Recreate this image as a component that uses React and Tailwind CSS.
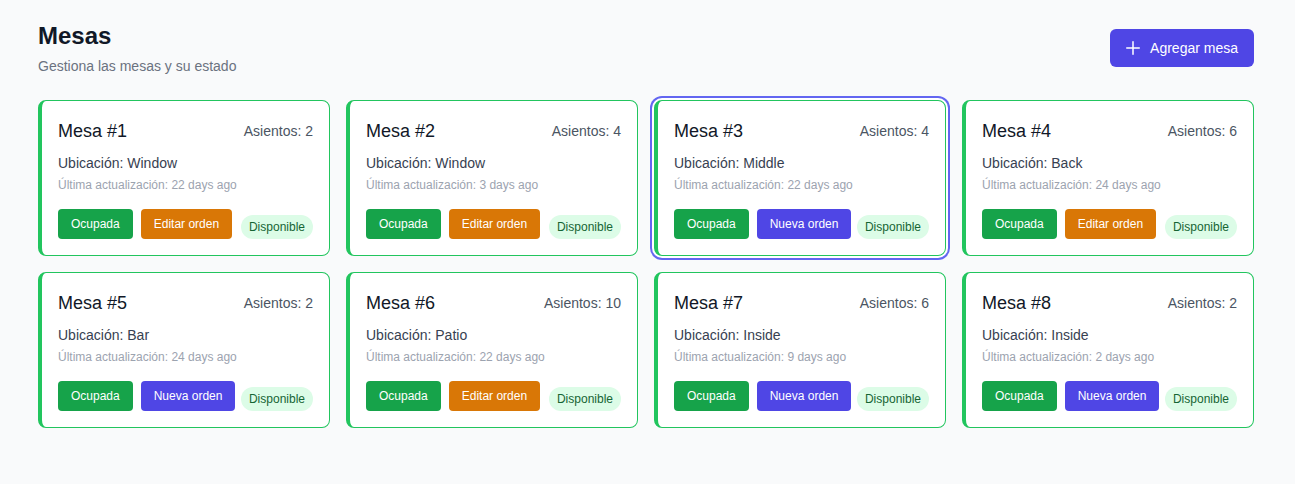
import React from 'react';

const mesas = [
  { n: 1, seats: 2, loc: 'Window', updated: '22 days ago', action: 'edit' },
  { n: 2, seats: 4, loc: 'Window', updated: '3 days ago', action: 'edit' },
  { n: 3, seats: 4, loc: 'Middle', updated: '22 days ago', action: 'new', selected: true },
  { n: 4, seats: 6, loc: 'Back', updated: '24 days ago', action: 'edit' },
  { n: 5, seats: 2, loc: 'Bar', updated: '24 days ago', action: 'new' },
  { n: 6, seats: 10, loc: 'Patio', updated: '22 days ago', action: 'edit' },
  { n: 7, seats: 6, loc: 'Inside', updated: '9 days ago', action: 'new' },
  { n: 8, seats: 2, loc: 'Inside', updated: '2 days ago', action: 'new' },
];

function MesaCard({ mesa }) {
  return (
    <div
      className={
        'bg-white rounded-lg border border-[#22c55e] border-l-4 p-4 ' +
        (mesa.selected ? 'ring-2 ring-[#6366f1] ring-offset-2' : '')
      }
    >
      <div className="flex items-center justify-between">
        <h3 className="text-lg text-[#111827]">Mesa #{mesa.n}</h3>
        <span className="text-sm text-[#4b5563]">Asientos: {mesa.seats}</span>
      </div>
      <p className="mt-2 text-sm text-[#374151]">Ubicación: {mesa.loc}</p>
      <p className="mt-1 text-xs text-[#9ca3af]">Última actualización: {mesa.updated}</p>
      <div className="mt-4 flex items-end justify-between whitespace-nowrap">
        <div className="flex gap-2">
          <button className="bg-[#16a34a] text-white text-xs font-medium px-[13px] py-[7px] rounded">Ocupada</button>
          {mesa.action === 'edit' ? (
            <button className="bg-[#d97706] text-white text-xs font-medium px-[13px] py-[7px] rounded">Editar orden</button>
          ) : (
            <button className="bg-[#4f46e5] text-white text-xs font-medium px-[13px] py-[7px] rounded">Nueva orden</button>
          )}
        </div>
        <span className="bg-[#dcfce7] text-[#166534] text-xs px-2 py-1 rounded-full">Disponible</span>
      </div>
    </div>
  );
}

export default function App() {
  return (
    <div className="min-h-[484px] bg-[#f9fafb] pl-[38px] pr-[41px] pt-5 pb-8" style={{ fontFamily: '"Liberation Sans", Arial, sans-serif' }}>
      <div className="flex items-center justify-between">
        <div>
          <h1 className="text-2xl font-bold text-[#111827]">Mesas</h1>
          <p className="mt-1 text-sm text-[#6b7280]">Gestiona las mesas y su estado</p>
        </div>
        <button className="flex items-center gap-2.5 bg-[#4f46e5] text-white text-sm px-4 py-[9px] rounded-md">
          <svg width="14" height="14" viewBox="0 0 14 14" fill="none" stroke="currentColor" strokeWidth="1.5" strokeLinecap="round">
            <path d="M7 0.75v12.5M0.75 7h12.5" />
          </svg>
          Agregar mesa
        </button>
      </div>
      <div className="mt-6 grid grid-cols-4 gap-4">
        {mesas.map((m) => (
          <MesaCard key={m.n} mesa={m} />
        ))}
      </div>
    </div>
  );
}
